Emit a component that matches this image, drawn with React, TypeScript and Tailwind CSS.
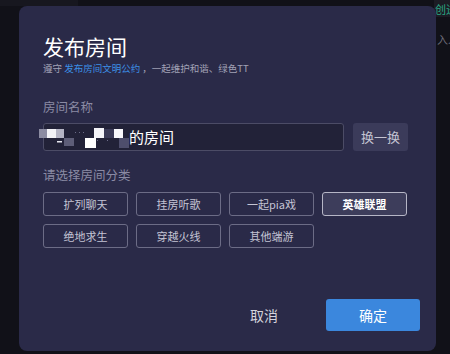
import { useState } from 'react'

const categories = ['扩列聊天', '挂房听歌', '一起pia戏', '英雄联盟', '绝地求生', '穿越火线', '其他端游']

// pixelated name mosaic in the input
function Mosaic() {
  return (
    <svg width="90" height="22" viewBox="0 0 90 22" className="shrink-0 ml-[-5px]">
      <rect x="0" y="3" width="8" height="9" fill="#8c8ca2" />
      <rect x="8" y="3" width="9" height="9" fill="#f2f2f6" />
      <rect x="17" y="3" width="8" height="9" fill="#b4b4c4" />
      <rect x="18" y="15" width="5" height="1.5" fill="#e8e8f0" />
      <rect x="25" y="12" width="10" height="8" fill="#5e5e78" />
      <rect x="36" y="6" width="1" height="1" fill="#6c6c88" />
      <rect x="40" y="6" width="1" height="1" fill="#6c6c88" />
      <rect x="44" y="6" width="1" height="1" fill="#6c6c88" />
      <rect x="46" y="12" width="11" height="10" fill="#ffffff" />
      <rect x="55" y="2" width="10" height="10" fill="#f4f4f8" />
      <rect x="65" y="3" width="10" height="9" fill="#3a3a56" />
      <rect x="75" y="3" width="9" height="9" fill="#f8f8fb" />
      <rect x="80" y="12" width="10" height="10" fill="#4e4e6c" />
      <rect x="58" y="14" width="1" height="1" fill="#6c6c88" />
      <rect x="68" y="14" width="1" height="1" fill="#6c6c88" />
    </svg>
  )
}

export default function App() {
  const [selected, setSelected] = useState('英雄联盟')

  return (
    <div
      className="relative w-[450px] h-[354px] overflow-hidden bg-[#111118] pt-[6px] pl-[19px]"
      style={{ fontFamily: '"Noto Sans CJK SC", "Noto Sans", sans-serif' }}
    >
      {/* page behind the dialog */}
      <div className="absolute left-0 top-0 h-[6px] w-[78px] bg-[#17171f]" />
      <div className="absolute right-0 top-0 h-[17px] w-[16px] bg-[#1c1c24]" />
      <div className="absolute left-[435px] top-[2px] w-[15px] h-[50px] overflow-hidden">
        <div className="text-[11px] leading-[14px] text-[#2aa884] whitespace-nowrap">创进</div>
        <div className="mt-[16px] ml-[2px] text-[11px] leading-[14px] text-[#6e6e7a] whitespace-nowrap">入人</div>
      </div>

      {/* dialog */}
      <div className="relative w-[417px] h-[345px] rounded-[8px] bg-[#2a2a48] pl-[24px] pr-[16px] flex flex-col">
        <h1 className="mt-[26px] text-[21px] leading-[28px] text-white">发布房间</h1>
        <p className="mt-[1px] text-[9.5px] leading-[14px] text-[#a2a2b6] whitespace-nowrap">
          遵守 <span className="text-[#3c8fe6]">发布房间文明公约</span> ，一起维护和谐、绿色TT
        </p>

        <div className="mt-[24px] text-[12.5px] leading-[16px] text-[#8a8aa4]">房间名称</div>
        <div className="mt-[8px] flex gap-[9px] w-[365px]">
          <div className="w-[301px] h-[28px] rounded-[3px] border border-[#4c4c66] bg-[#222238] flex items-center overflow-visible">
            <Mosaic />
            <span className="text-[15px] leading-[20px] text-white">的房间</span>
          </div>
          <button className="w-[55px] h-[28px] rounded-[3px] bg-[#3b3b5a] text-[13px] text-[#c4c4d2]">换一换</button>
        </div>

        <div className="mt-[16px] text-[12.5px] leading-[16px] text-[#8a8aa4]">请选择房间分类</div>
        <div className="mt-[9px] grid grid-cols-4 gap-x-[8px] gap-y-[8px] w-[364px]">
          {categories.map(c => (
            <button
              key={c}
              onClick={() => setSelected(c)}
              className={
                c === selected
                  ? 'h-[24px] rounded-[3px] border border-[#b6b6c6] bg-[#3d3d5b] text-[11px] font-bold text-white'
                  : 'h-[24px] rounded-[3px] border border-[#6c6c86] text-[11px] text-[#c4c4d4]'
              }
            >
              {c}
            </button>
          ))}
        </div>

        <div className="mt-auto mb-[20px] flex items-center justify-end gap-[48px]">
          <button className="text-[14px] leading-[20px] text-[#d4d4dc]">取消</button>
          <button className="w-[94px] h-[32px] rounded-[3px] bg-[#3b87dd] text-[14px] text-white">确定</button>
        </div>
      </div>
    </div>
  )
}
